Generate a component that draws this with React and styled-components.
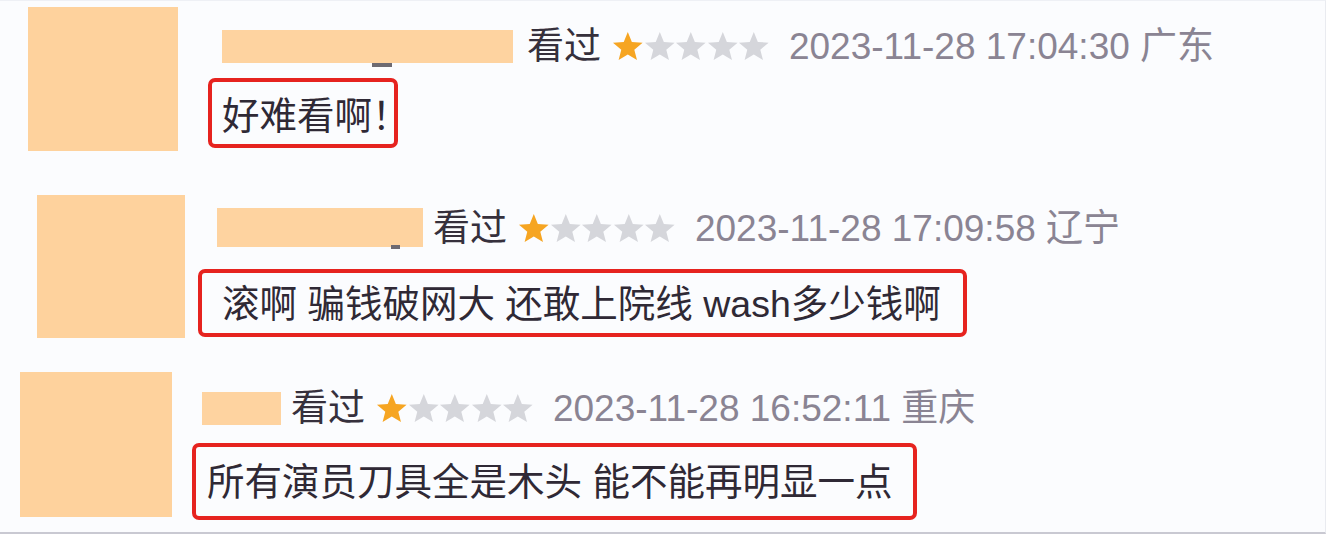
import React from "react";
import styled, { createGlobalStyle } from "styled-components";

const Global = createGlobalStyle`
  html, body { margin: 0; padding: 0; background: #ffffff; }
  body { font-family: "Liberation Sans", "Noto Sans CJK SC", sans-serif; }
`;

const Frame = styled.div`
  width: 1326px;
  height: 538px;
  box-sizing: border-box;
  padding-bottom: 4px;
  background: #ffffff;
`;

const Panel = styled.div`
  height: 534px;
  box-sizing: border-box;
  display: flex;
  flex-direction: column;
  background: #fbfcfe;
  border-top: 1px solid #eef0f5;
  border-right: 1px solid #e9ebf0;
  border-bottom: 2px solid #c9c9d2;
`;

const Review = styled.div`
  display: flex;
  align-items: flex-start;
  height: ${(p) => p.$h}px;
  padding-left: ${(p) => p.$left}px;
  gap: ${(p) => p.$gap}px;
  box-sizing: border-box;
`;

const Avatar = styled.div`
  flex: none;
  width: ${(p) => p.$w}px;
  height: ${(p) => p.$h}px;
  margin-top: ${(p) => p.$top}px;
  background: #fed29d;
`;

const Body = styled.div`
  display: flex;
  flex-direction: column;
  align-items: flex-start;
  padding-top: ${(p) => p.$top}px;
`;

const Header = styled.div`
  display: flex;
  align-items: center;
  height: 40px;
  margin-left: ${(p) => p.$indent}px;
  color: #36303c;
  font-size: 37px;
  white-space: nowrap;
`;

const NameMask = styled.div`
  position: relative;
  width: ${(p) => p.$w}px;
  height: ${(p) => p.$h}px;
  margin-top: ${(p) => p.$dy}px;
  margin-right: ${(p) => p.$gap}px;
  background: #fed3a0;

  &::after {
    content: "";
    display: ${(p) => (p.$tail ? "block" : "none")};
    position: absolute;
    left: ${(p) => (p.$tail ? p.$tail.x : 0)}px;
    top: ${(p) => (p.$tail ? p.$tail.y : 0)}px;
    width: ${(p) => (p.$tail ? p.$tail.w : 0)}px;
    height: 4px;
    background: #6d6a72;
  }
`;

const Watched = styled.span`
  line-height: 40px;
  margin-top: 4px;
  margin-right: 11px;
`;

const Stars = styled.div`
  display: flex;
  align-items: center;
  margin-top: 2px;
  margin-right: 19px;
`;

const StarIcon = styled.svg`
  width: 31.6px;
  height: 30px;
  display: block;
`;

const DateText = styled.span`
  line-height: 40px;
  margin-top: 4px;
  color: #8a8493;
`;

const CommentBox = styled.div`
  box-sizing: border-box;
  width: ${(p) => p.$w}px;
  height: ${(p) => p.$h}px;
  margin-top: ${(p) => p.$gapTop}px;
  padding-left: ${(p) => p.$pad}px;
  display: flex;
  align-items: center;
  border: 4px solid #e6231f;
  border-radius: 7px;
  color: #2f2935;
  font-size: 37.5px;
  white-space: nowrap;
`;

const CommentText = styled.span`
  line-height: 40px;
  margin-top: ${(p) => p.$dy}px;
`;

function Star({ on }) {
  return (
    <StarIcon viewBox="0 0 32 30">
      <path
        d="M16 0.8L20.1 10.9L31 11.6L22.6 18.7L25.3 29.3L16 23.5L6.7 29.3L9.4 18.7L1 11.6L11.9 10.9Z"
        fill={on ? "#f6a522" : "#d5d6db"}
      />
    </StarIcon>
  );
}

const reviews = [
  {
    h: 184, left: 28, gap: 30,
    avatar: { w: 150, h: 144, top: 6 },
    bodyTop: 24, indent: 14,
    mask: { w: 291, h: 33, dy: 2, gap: 14, tail: { x: 150, y: 33, w: 20 } },
    date: "2023-11-28 17:04:30 广东",
    box: { w: 190, h: 70, gapTop: 13, pad: 10, dy: 6 },
    text: "好难看啊！",
  },
  {
    h: 177, left: 37, gap: 13,
    avatar: { w: 148, h: 143, top: 10 },
    bodyTop: 22, indent: 19,
    mask: { w: 206, h: 39, dy: 0, gap: 10, tail: { x: 174, y: 37, w: 9 } },
    date: "2023-11-28 17:09:58 辽宁",
    box: { w: 769, h: 68, gapTop: 22, pad: 20, dy: 1 },
    text: "滚啊 骗钱破网大 还敢上院线 wash多少钱啊",
  },
  {
    h: 170, left: 20, gap: 20,
    avatar: { w: 152, h: 145, top: 10 },
    bodyTop: 25, indent: 10,
    mask: { w: 79, h: 33, dy: 2, gap: 10, tail: null },
    date: "2023-11-28 16:52:11 重庆",
    box: { w: 725, h: 77, gapTop: 16, pad: 11, dy: 1 },
    text: "所有演员刀具全是木头 能不能再明显一点",
  },
];

export default function App() {
  return (
    <>
      <Global />
      <Frame>
        <Panel>
          {reviews.map((r, i) => (
            <Review key={i} $h={r.h} $left={r.left} $gap={r.gap}>
              <Avatar $w={r.avatar.w} $h={r.avatar.h} $top={r.avatar.top} />
              <Body $top={r.bodyTop}>
                <Header $indent={r.indent}>
                  <NameMask
                    $w={r.mask.w}
                    $h={r.mask.h}
                    $dy={r.mask.dy}
                    $gap={r.mask.gap}
                    $tail={r.mask.tail}
                  />
                  <Watched>看过</Watched>
                  <Stars>
                    {[0, 1, 2, 3, 4].map((s) => (
                      <Star key={s} on={s === 0} />
                    ))}
                  </Stars>
                  <DateText>{r.date}</DateText>
                </Header>
                <CommentBox $w={r.box.w} $h={r.box.h} $gapTop={r.box.gapTop} $pad={r.box.pad}>
                  <CommentText $dy={r.box.dy}>{r.text}</CommentText>
                </CommentBox>
              </Body>
            </Review>
          ))}
        </Panel>
      </Frame>
    </>
  );
}
